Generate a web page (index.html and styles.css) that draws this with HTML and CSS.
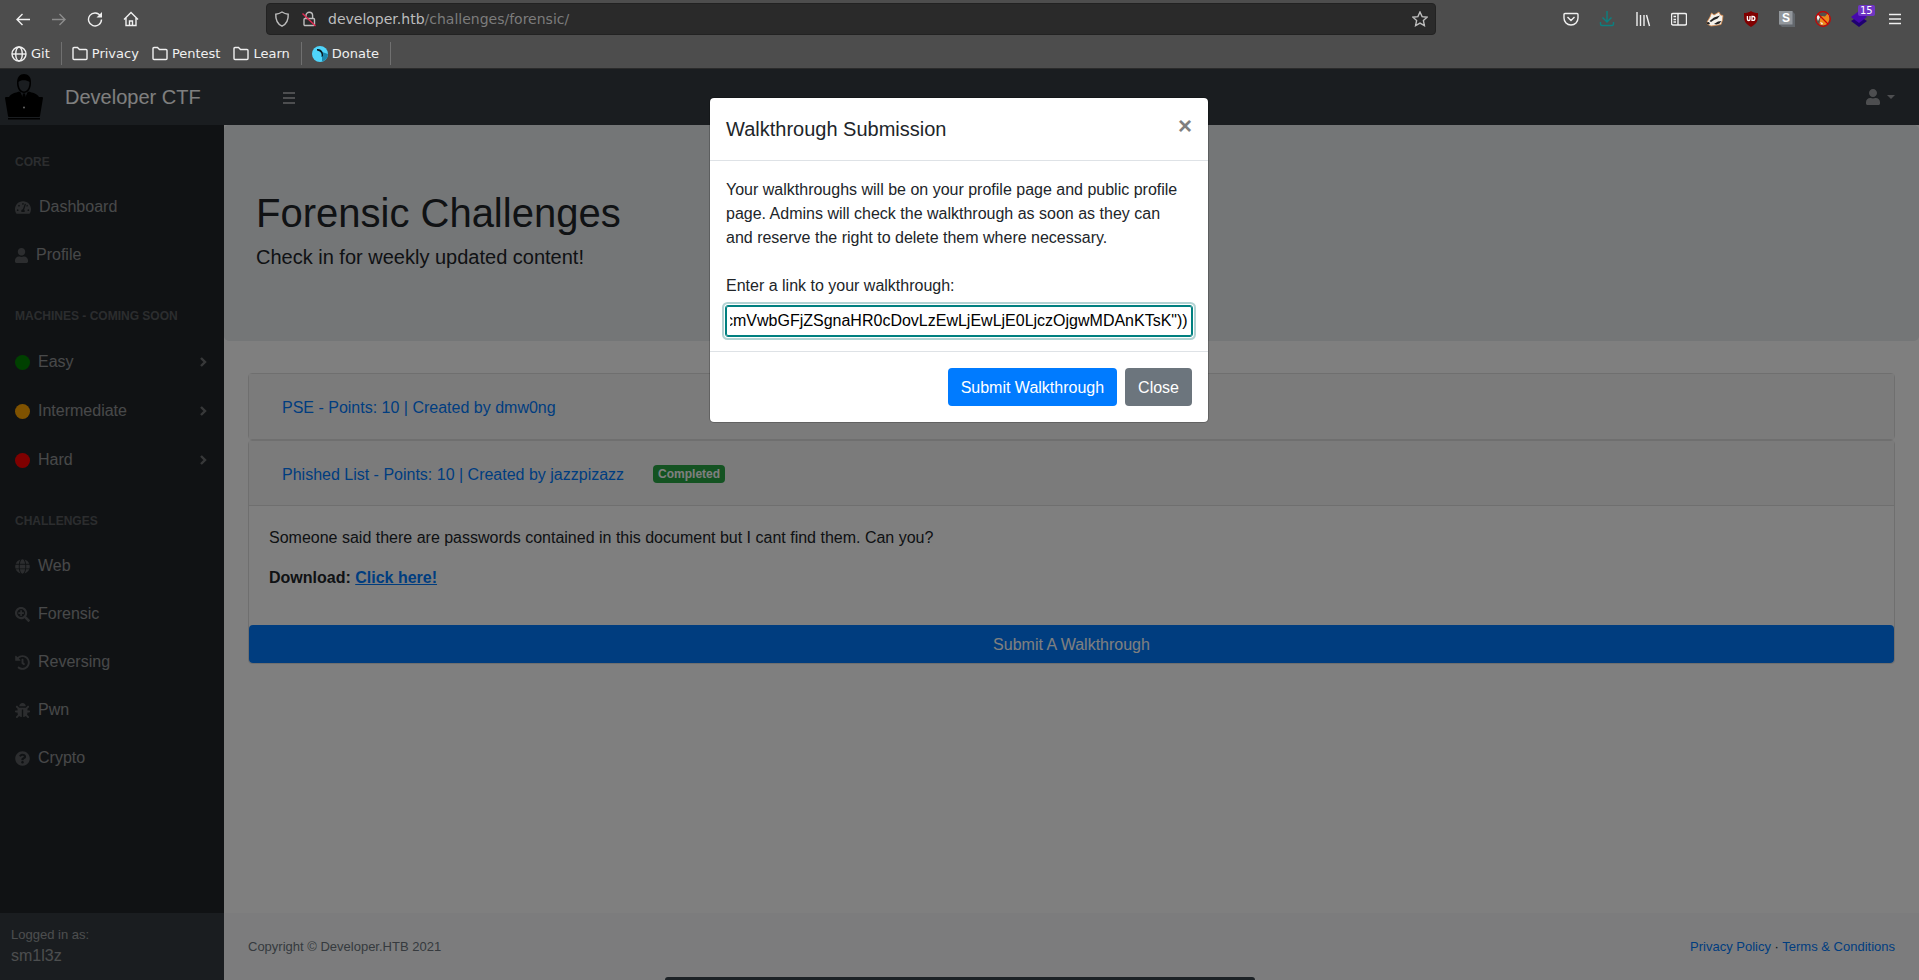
FILE: index.html
```html
<!DOCTYPE html>
<html lang="en">
<head>
    <meta charset="UTF-8">
    <meta name="viewport" content="width=device-width, initial-scale=1.0">
    <title>Developer CTF</title>
    <link rel="stylesheet" href="styles.css">
</head>
<body>

    <!-- Browser toolbar -->
    <header class="browser">
        <div class="toolbar">
            <button class="tool" aria-label="Back"><svg width="16" height="16" viewBox="0 0 16 16"><path d="M15 8.500H2M7.500 3L2 8.500 7.500 14"/></svg></button>
            <button class="tool tool-off" aria-label="Forward"><svg width="16" height="16" viewBox="0 0 16 16"><path d="M1 8.500h13M8.500 3L14 8.500 8.500 14"/></svg></button>
            <button class="tool" aria-label="Reload"><svg width="16" height="16" viewBox="0 0 16 16"><path d="M13.500 5A6.500 6.500 0 1 0 14.500 8.500"/><path class="solid" d="M15 1v5.500H9.500z"/></svg></button>
            <button class="tool" aria-label="Home"><svg width="16" height="16" viewBox="0 0 16 16"><path d="M1 8.500L8 1.500l7 7M3 7v7.500h10V7M6.500 14.500V10h3v4.500"/></svg></button>

            <div class="url-bar">
                <svg class="url-icon" width="16" height="16" viewBox="0 0 16 16"><path d="M8 1C6 2.300 4 3 1.800 3.200 1.500 8.500 3.200 12.800 8 15.200c4.800-2.400 6.500-6.700 6.200-12C12 3 10 2.300 8 1z"/></svg>
                <svg class="url-icon" width="16" height="16" viewBox="0 0 16 16"><rect x="3" y="7.500" width="10.500" height="7" rx="1"/><path d="M5 7.500V4.500a3.300 3.300 0 0 1 6.600 0v3"/><path class="slash" d="M1.500 2.500l13 12.500"/></svg>
                <span class="url">developer.htb<span class="url-path">/challenges/forensic/</span></span>
                <svg class="url-icon star" width="16" height="16" viewBox="0 0 16 16"><path d="M8 1l2.100 4.600 5 .6-3.700 3.400 1 5L8 12.100l-4.400 2.500 1-5L.9 6.200l5-.6z"/></svg>
            </div>

            <button class="tool" aria-label="Pocket"><svg width="16" height="16" viewBox="0 0 16 16"><path d="M2 2.500h12a1 1 0 0 1 1 1V7c0 4-3 7-7 7S1 11 1 7V3.500a1 1 0 0 1 1-1zM4.500 6L8 9.500 11.500 6"/></svg></button>
            <button class="tool tool-download" aria-label="Downloads"><svg width="16" height="16" viewBox="0 0 16 16"><path d="M8 0v11M3.500 6.500L8 11l4.500-4.500M1.500 11v2a1.500 1.500 0 0 0 1.500 1.500h10a1.500 1.500 0 0 0 1.500-1.500v-2"/></svg></button>
            <button class="tool" aria-label="Library"><svg width="16" height="16" viewBox="0 0 16 16"><path d="M2 1v14M5.500 4v11M9 4v11M11.500 4l3 11"/></svg></button>
            <button class="tool" aria-label="Sidebars"><svg width="16" height="16" viewBox="0 0 16 16"><rect x="0.500" y="2.500" width="15" height="11.500" rx="1.500"/><path d="M7 2.500V14M2.500 5.500h2.500M2.500 8.500h2.500M2.500 11h2.500"/></svg></button>
            <button class="tool" aria-label="Privacy Badger">
                <svg class="addon" width="18" height="16" viewBox="0 0 18 16">
                    <path fill="#f5f1ea" stroke="#d98a4a" stroke-width=".8" d="M1 11L4 6l1.500-4L8 4l5-3 1.500 3L17 4.500 16.500 9 15 13.500l-6 1-4 .5-4-2z"/>
                    <path fill="#222" d="M3.500 10L8 6.500l6-2-2.500 3-3.500 1.500L5 11zM8 13l4-2.500L15.500 10l-2 2.500-3 1zM0 11.500l3-.5 1 2-2.500.5z"/>
                </svg>
            </button>
            <button class="tool" aria-label="uBlock Origin">
                <svg class="addon" width="16" height="16" viewBox="0 0 16 16">
                    <path fill="#800000" d="M8 0c2 1.500 4.500 2 7 2 0 7 0 10-7 14C1 12 1 9 1 2c2.500 0 5-.5 7-2z"/>
                    <path fill="none" stroke="#fff" stroke-width="1.300" d="M4.400 5v3.200a1.300 1.300 0 0 0 2.600 0V5M9 5.500v3.800h1a1.900 1.900 0 0 0 0-3.800z"/>
                </svg>
            </button>
            <button class="tool" aria-label="Stylus">
                <svg class="addon" width="16" height="16" viewBox="0 0 16 16">
                    <path fill="#62676c" d="M13 0l3 3v13H3l-3-3z"/>
                    <path fill="#92979c" d="M0 0h13.500v13.500H0z"/>
                    <text class="s-letter" x="3" y="11">S</text>
                </svg>
            </button>
            <button class="tool" aria-label="FoxyProxy">
                <svg class="addon" width="16" height="16" viewBox="0 0 16 16">
                    <circle cx="8" cy="8" r="7" fill="#58514b"/>
                    <path fill="#f08a1d" d="M5 8l1.500-3L10 5.500 13 2l1.500 6-2 5-4 1.500-4-1z"/>
                    <path fill="#eee" d="M1.500 6l2-3 1.500 3-2 4zM5 11l3 1-1 2zM13 3l1.500 1v3z"/>
                    <circle cx="8" cy="8" r="7.300" fill="none" stroke="#c00" stroke-width="1.200"/>
                    <path stroke="#c00" stroke-width="1.200" d="M3 3l10 10"/>
                </svg>
            </button>
            <button class="tool tool-layers" aria-label="Wappalyzer">
                <svg class="addon" width="16" height="16" viewBox="0 0 16 16">
                    <path fill="#1f0071" d="M0 10l8-5 8 5-8 6z"/>
                    <path fill="#4608ad" d="M0 6l8-6 8 6-8 6z"/>
                </svg>
                <span class="count">15</span>
            </button>
            <button class="tool" aria-label="Menu"><svg width="16" height="16" viewBox="0 0 16 16"><path d="M2 3.500h12M2 8h12M2 12.500h12"/></svg></button>
        </div>

        <nav class="bookmarks">
            <a href="#"><svg width="16" height="16" viewBox="0 0 16 16"><circle cx="8" cy="8" r="7"/><ellipse cx="8" cy="8" rx="3.300" ry="7"/><path d="M1 8h14"/></svg>Git</a>
            <span class="sep"></span>
            <a href="#"><svg width="16" height="16" viewBox="0 0 16 16"><path d="M1 12.500v-10a1 1 0 0 1 1-1h3.500l2 2H14a1 1 0 0 1 1 1v8a1 1 0 0 1-1 1H2a1 1 0 0 1-1-1z"/></svg>Privacy</a>
            <a href="#"><svg width="16" height="16" viewBox="0 0 16 16"><path d="M1 12.500v-10a1 1 0 0 1 1-1h3.500l2 2H14a1 1 0 0 1 1 1v8a1 1 0 0 1-1 1H2a1 1 0 0 1-1-1z"/></svg>Pentest</a>
            <a href="#"><svg width="16" height="16" viewBox="0 0 16 16"><path d="M1 12.500v-10a1 1 0 0 1 1-1h3.500l2 2H14a1 1 0 0 1 1 1v8a1 1 0 0 1-1 1H2a1 1 0 0 1-1-1z"/></svg>Learn</a>
            <span class="sep"></span>
            <a href="#"><svg class="addon" width="16" height="16" viewBox="0 0 16 16"><circle cx="8" cy="8" r="8" fill="#4fd5fb"/><path fill="#1c87ad" d="M10 6l6 2a8 8 0 0 1-6 7.500z"/><path fill="#0b1a20" d="M5 3c4-.5 6.500 2.500 6 7l-1.500 1C10 8 9.500 5.500 5 4.500z"/></svg>Donate</a>
            <span class="sep"></span>
        </nav>
    </header>

    <div class="app">
        <!-- Top nav -->
        <nav class="topnav">
            <a class="brand" href="#">
                <svg width="38" height="46" viewBox="0 0 38 46">
                    <path d="M12 9c0-6 3-9 7-9s7.500 3 7 9c0 6-3 10-7 10s-7-4-7-10z"/>
                    <path fill="#343a40" d="M13.500 8c2-2.500 8-2.500 11 0 0 6-2.500 9.500-5.500 9.500S13.500 14 13.500 8z"/>
                    <path d="M4 23c2-4 7-4 10-5.500l5 2.500 5-2.500c3 1.500 8 1.500 10 5.500z"/>
                    <path fill="#343a40" d="M15.500 18l3.500 2 3.500-2-2 5h-3z"/>
                    <path d="M18 19.500h2l.8 3.500h-3.600zM1 23h36a1 1 0 0 1 1 1l-3 18a1 1 0 0 1-1 1H4a1 1 0 0 1-1-1L0 24a1 1 0 0 1 1-1zM3 44h32v1.500H3z"/>
                    <circle cx="19" cy="33.500" r="1" fill="#ccc"/>
                </svg>
                Developer CTF
            </a>
            <button class="toggle" aria-label="Toggle sidebar">
                <svg width="12" height="14" viewBox="0 0 12 14"><path d="M0 2h12v2H0zM0 7h12v2H0zM0 12h12v2H0z"/></svg>
            </button>
            <button class="user-menu" aria-label="User menu">
                <svg width="14" height="16" viewBox="0 0 448 512"><path d="M224 256c70.700 0 128-57.300 128-128S294.700 0 224 0 96 57.300 96 128s57.300 128 128 128zm89.600 32h-16.700c-22.200 10.200-46.900 16-72.900 16s-50.600-5.800-72.900-16h-16.700C60.200 288 0 348.200 0 422.400V464c0 26.500 21.500 48 48 48h352c26.500 0 48-21.500 48-48v-41.600c0-74.200-60.200-134.400-134.400-134.400z"/></svg>
                <span class="caret"></span>
            </button>
        </nav>

        <div class="layout">
            <aside class="sidebar">
                <nav class="side-menu">
                    <h2 class="side-heading">Core</h2>
                    <a class="side-link" href="#"><svg width="16" height="15" viewBox="0 0 576 512"><path d="M288 32C128.940 32 0 160.940 0 320c0 52.800 14.250 102.260 39.060 144.800 5.610 9.620 16.300 15.200 27.440 15.200h443c11.140 0 21.830-5.580 27.440-15.200C561.750 422.260 576 372.800 576 320c0-159.060-128.940-288-288-288zm0 64c14.710 0 26.580 10.130 30.320 23.650-1.110 2.260-2.640 4.230-3.450 6.670l-9.220 27.670c-5.130 3.490-10.970 6.010-17.640 6.010-17.670 0-32-14.330-32-32S270.330 96 288 96zM96 384c-17.670 0-32-14.330-32-32s14.330-32 32-32 32 14.330 32 32-14.330 32-32 32zm48-160c-17.670 0-32-14.330-32-32s14.330-32 32-32 32 14.330 32 32-14.330 32-32 32zm246.770-72.410l-61.330 184C343.130 347.330 352 364.540 352 384c0 11.720-3.380 22.550-8.880 32H232.880c-5.500-9.450-8.880-20.280-8.880-32 0-33.940 26.500-61.430 59.900-63.590l61.340-184.010c4.170-12.560 17.730-19.450 30.360-15.170 12.570 4.190 19.350 17.790 15.170 30.360zm14.660 57.200l15.520-46.550c3.470-1.290 7.130-2.230 11.050-2.230 17.670 0 32 14.330 32 32s-14.330 32-32 32c-11.380-.01-20.890-6.280-26.570-15.220zM480 384c-17.670 0-32-14.330-32-32s14.330-32 32-32 32 14.330 32 32-14.330 32-32 32z"/></svg>Dashboard</a>
                    <a class="side-link" href="#"><svg width="13" height="15" viewBox="0 0 448 512"><path d="M224 256c70.700 0 128-57.300 128-128S294.700 0 224 0 96 57.300 96 128s57.300 128 128 128zm89.600 32h-16.700c-22.200 10.200-46.900 16-72.900 16s-50.600-5.800-72.900-16h-16.700C60.200 288 0 348.200 0 422.400V464c0 26.500 21.500 48 48 48h352c26.500 0 48-21.500 48-48v-41.600c0-74.200-60.200-134.400-134.400-134.400z"/></svg>Profile</a>

                    <h2 class="side-heading">Machines - Coming Soon</h2>
                    <a class="side-link level" href="#"><span class="dot easy"></span>Easy<svg class="arrow" width="8" height="12" viewBox="0 0 8 12"><path d="M2 2l4 4-4 4"/></svg></a>
                    <a class="side-link level" href="#"><span class="dot medium"></span>Intermediate<svg class="arrow" width="8" height="12" viewBox="0 0 8 12"><path d="M2 2l4 4-4 4"/></svg></a>
                    <a class="side-link level" href="#"><span class="dot hard"></span>Hard<svg class="arrow" width="8" height="12" viewBox="0 0 8 12"><path d="M2 2l4 4-4 4"/></svg></a>

                    <h2 class="side-heading">Challenges</h2>
                    <a class="side-link" href="#"><svg width="15" height="15" viewBox="0 0 496 512"><path d="M336.500 160C322 70.700 287.800 8 248 8s-74 62.700-88.500 152h177zM152 256c0 22.200 1.200 43.500 3.300 64h185.300c2.100-20.500 3.300-41.800 3.300-64s-1.200-43.500-3.300-64H155.300c-2.100 20.500-3.300 41.800-3.300 64zm324.700-96c-28.600-67.900-86.500-120.400-158-141.600 24.400 33.800 41.200 84.700 50 141.600h108zM177.200 18.400C105.800 39.600 47.800 92.100 19.300 160h108c8.700-56.900 25.500-107.800 49.900-141.600zM487.400 192H372.700c2.100 21 3.300 42.500 3.300 64s-1.200 43-3.300 64h114.600c5.500-20.500 8.600-41.800 8.600-64s-3.100-43.500-8.500-64zM120 256c0-21.500 1.200-43 3.300-64H8.600C3.200 212.500 0 233.800 0 256s3.200 43.500 8.600 64h114.600c-2-21-3.200-42.500-3.200-64zm39.500 96c14.500 89.300 48.700 152 88.500 152s74-62.700 88.500-152h-177zm159.300 141.600c71.400-21.200 129.400-73.700 158-141.600h-108c-8.800 56.900-25.600 107.800-50 141.600zM19.300 352c28.600 67.900 86.500 120.400 158 141.600-24.400-33.800-41.200-84.700-50-141.600h-108z"/></svg>Web</a>
                    <a class="side-link" href="#"><svg width="15" height="15" viewBox="0 0 512 512"><path d="M304 192v32c0 6.600-5.400 12-12 12h-56v56c0 6.600-5.400 12-12 12h-32c-6.600 0-12-5.400-12-12v-56h-56c-6.600 0-12-5.400-12-12v-32c0-6.600 5.400-12 12-12h56v-56c0-6.600 5.400-12 12-12h32c6.600 0 12 5.400 12 12v56h56c6.600 0 12 5.400 12 12zm201 284.700L476.700 505c-9.400 9.400-24.600 9.400-33.900 0L343 405.300c-4.500-4.500-7-10.600-7-17V372c-35.300 27.600-79.700 44-128 44C93.100 416 0 322.900 0 208S93.100 0 208 0s208 93.100 208 208c0 48.300-16.400 92.700-44 128h16.300c6.400 0 12.500 2.500 17 7l99.700 99.700c9.300 9.400 9.300 24.600 0 34zM344 208c0-75.200-60.800-136-136-136S72 132.800 72 208s60.800 136 136 136 136-60.800 136-136z"/></svg>Forensic</a>
                    <a class="side-link" href="#"><svg width="15" height="15" viewBox="0 0 512 512"><path d="M504 255.531c.253 136.640-111.180 248.372-247.820 248.468-59.015.042-113.223-20.530-155.822-54.911-11.077-8.940-11.905-25.541-1.839-35.607l11.267-11.267c8.609-8.609 22.353-9.551 31.891-1.984C173.062 425.135 212.781 440 256 440c101.705 0 184-82.311 184-184 0-101.705-82.311-184-184-184-48.814 0-93.149 18.969-126.068 49.932l50.754 50.754c10.080 10.080 2.941 27.314-11.313 27.314H24c-8.837 0-16-7.163-16-16V38.627c0-14.254 17.234-21.393 27.314-11.314l49.372 49.372C129.209 34.136 189.552 8 256 8c136.810 0 247.747 110.780 248 247.531zm-180.912 78.784l9.823-12.630c8.138-10.463 6.253-25.542-4.210-33.679L288 256.349V152c0-13.255-10.745-24-24-24h-16c-13.255 0-24 10.745-24 24v135.651l65.409 50.874c10.463 8.137 25.541 6.253 33.679-4.210z"/></svg>Reversing</a>
                    <a class="side-link" href="#"><svg width="15" height="15" viewBox="0 0 512 512"><path d="M511.988 288.900c-.478 17.430-15.217 31.100-32.653 31.100H424v16c0 21.864-4.882 42.584-13.600 61.145l60.228 60.228c12.496 12.497 12.496 32.758 0 45.255-12.498 12.497-32.759 12.496-45.256 0l-54.736-54.736C345.886 467.965 314.351 480 280 480V236c0-6.627-5.373-12-12-12h-24c-6.627 0-12 5.373-12 12v244c-34.351 0-65.886-12.035-90.636-32.108l-54.736 54.736c-12.498 12.497-32.759 12.496-45.256 0-12.496-12.497-12.496-32.758 0-45.255l60.228-60.228C92.882 378.584 88 357.864 88 336v-16H32.666C15.230 320 .491 306.330.013 288.900-.484 270.816 14.028 256 32 256h56v-58.745l-46.628-46.628c-12.496-12.497-12.496-32.758 0-45.255 12.498-12.497 32.758-12.497 45.256 0L141.255 160h229.489l54.627-54.627c12.498-12.497 32.758-12.497 45.256 0 12.496 12.497 12.496 32.758 0 45.255L424 197.255V256h56c17.972 0 32.484 14.816 31.988 32.900zM257 0c-61.856 0-112 50.144-112 112h224C369 50.144 318.856 0 257 0z"/></svg>Pwn</a>
                    <a class="side-link" href="#"><svg width="15" height="15" viewBox="0 0 512 512"><path d="M504 256c0 136.997-111.043 248-248 248S8 392.997 8 256C8 119.083 119.043 8 256 8s248 111.083 248 248zM262.655 90c-54.497 0-89.255 22.957-116.549 63.758-3.536 5.286-2.353 12.415 2.715 16.258l34.699 26.310c5.205 3.947 12.621 3.008 16.665-2.122 17.864-22.658 30.113-35.797 57.303-35.797 20.429 0 45.698 13.148 45.698 32.958 0 14.976-12.363 22.667-32.534 33.976C247.128 238.528 216 254.941 216 296v4c0 6.627 5.373 12 12 12h56c6.627 0 12-5.373 12-12v-1.333c0-28.462 83.186-29.647 83.186-106.667 0-58.002-60.165-102-116.531-102zM256 338c-25.365 0-46 20.635-46 46 0 25.364 20.635 46 46 46s46-20.636 46-46c0-25.364-20.635-46-46-46z"/></svg>Crypto</a>
                </nav>
                <div class="side-footer">
                    <div class="small">Logged in as:</div>
                    sm1l3z
                </div>
            </aside>

            <div class="content">
                <main>
                    <div class="jumbotron">
                        <h1>Forensic Challenges</h1>
                        <p>Check in for weekly updated content!</p>
                    </div>

                    <div class="challenges">
                        <div class="card">
                            <div class="card-header">
                                <button class="btn btn-link">PSE - Points: 10 | Created by dmw0ng</button>
                            </div>
                        </div>
                        <div class="card">
                            <div class="card-header open">
                                <button class="btn btn-link">Phished List - Points: 10 | Created by jazzpizazz</button>
                                <span class="badge">Completed</span>
                            </div>
                            <div class="card-body">
                                <p>Someone said there are passwords contained in this document but I cant find them. Can you?</p>
                                <p><b>Download: <a class="download" href="#">Click here!</a></b></p>
                            </div>
                            <button class="btn btn-primary btn-block">Submit A Walkthrough</button>
                        </div>
                    </div>
                </main>

                <footer class="footer">
                    <span>Copyright © Developer.HTB 2021</span>
                    <span class="footer-links"><a href="#">Privacy Policy</a> · <a href="#">Terms &amp; Conditions</a></span>
                </footer>
            </div>
        </div>

        <!-- Walkthrough modal -->
        <div class="backdrop">
            <div class="modal" role="dialog" aria-labelledby="modal-title">
                <div class="modal-header">
                    <h2 id="modal-title">Walkthrough Submission</h2>
                    <button class="close" aria-label="Close dialog">×</button>
                </div>
                <div class="modal-body">
                    <p>Your walkthroughs will be on your profile page and public profile page. Admins will check the walkthrough as soon as they can and reserve the right to delete them where necessary.</p>
                    <label for="walkthrough">Enter a link to your walkthrough:</label>
                    <input type="text" id="walkthrough" value="cmVwbGFjZSgnaHR0cDovLzEwLjEwLjE0LjczOjgwMDAnKTsK&quot;))">
                </div>
                <div class="modal-footer">
                    <button class="btn btn-primary">Submit Walkthrough</button>
                    <button class="btn btn-secondary">Close</button>
                </div>
            </div>
        </div>
    </div>

    <div class="dock"></div>

    <script>
        // keep the end of the link in view
        const input = document.getElementById('walkthrough');
        input.scrollLeft = input.scrollWidth;
    </script>

</body>
</html>
```

FILE: styles.css
```css
* {
    box-sizing: border-box;
}
body {
    display: flex;
    flex-direction: column;
    min-height: 100vh;
    margin: 0;
    font-family: "Liberation Sans", Arial, sans-serif;
    font-size: 16px;
    line-height: 24px;
    color: #212529;
    background-color: #fff;
}
a {
    color: #007bff;
    text-decoration: none;
}
button {
    font: inherit;
    cursor: pointer;
}
h1, h2, p {
    margin: 0;
    font-weight: normal;
}

/* Browser */
.browser {
    background-color: #4d4d4d;
    border-bottom: 1px solid #2b2b2b;
    font-family: "DejaVu Sans", sans-serif;
    font-size: 13px;
    color: #f0f0f0;
}
.toolbar {
    display: flex;
    align-items: center;
    height: 38px;
    padding: 0 6px 0 5px;
}
.tool {
    display: flex;
    align-items: center;
    justify-content: center;
    width: 36px;
    height: 32px;
    padding: 0;
    border: none;
    background: none;
    color: #f0f0f0;
}
.tool-off {
    color: #8c8c8c;
}
.tool-download {
    color: #0b8080;
}
.tool-layers {
    position: relative;
}
.count {
    position: absolute;
    top: 2px;
    left: 17px;
    padding: 0 2px;
    border-radius: 2px;
    background-color: #6f35c4;
    color: #fff;
    font-size: 10px;
    line-height: 11px;
}
.browser svg {
    flex: none;
    fill: none;
    stroke: currentColor;
    stroke-width: 1.4;
}
.browser svg .solid {
    fill: currentColor;
    stroke: none;
}
.browser svg.addon {
    stroke: none;
}
.s-letter {
    fill: #fff;
    font-family: "Liberation Sans", Arial, sans-serif;
    font-size: 12px;
    font-weight: bold;
}
.url-bar {
    display: flex;
    flex: 1;
    align-items: center;
    gap: 11px;
    height: 32px;
    margin: 0 117px;
    padding: 0 7px;
    border: 1px solid #222;
    border-radius: 4px;
    background-color: #2a2a2a;
    color: #bdbdbd;
}
.url {
    font-size: 14px;
}
.url-path {
    color: #7c7c7c;
}
.url-bar .slash {
    stroke: #e22850;
}
.star {
    margin-left: auto;
}
.bookmarks {
    display: flex;
    align-items: center;
    gap: 13px;
    height: 30px;
    padding: 1px 11px 0;
}
.bookmarks a {
    display: flex;
    align-items: center;
    gap: 4px;
    color: #f0f0f0;
}
.sep {
    width: 1px;
    height: 23px;
    margin: 0 -3px 0 -2px;
    background-color: #707070;
}

/* Top nav */
.app {
    position: relative;
    display: flex;
    flex: 1;
    flex-direction: column;
}
.topnav {
    display: flex;
    align-items: center;
    height: 56px;
    padding: 0 24px 0 5px;
    background-color: #343a40;
}
.brand {
    display: flex;
    align-items: center;
    gap: 22px;
    width: 278px;
    font-size: 20px;
    color: #fff;
}
.toggle, .user-menu {
    display: flex;
    align-items: center;
    padding: 0;
    border: none;
    background: none;
}
.toggle svg, .user-menu svg {
    fill: rgba(255, 255, 255, 0.5);
}
.user-menu {
    gap: 7px;
    margin-left: auto;
}
.caret {
    border-top: 4px solid rgba(255, 255, 255, 0.5);
    border-left: 4px solid transparent;
    border-right: 4px solid transparent;
}

/* Sidebar */
.layout {
    display: flex;
    flex: 1;
}
.sidebar {
    display: flex;
    flex: none;
    flex-direction: column;
    justify-content: space-between;
    width: 224px;
    background-color: #212529;
    color: rgba(255, 255, 255, 0.5);
}
.side-heading {
    padding: 28px 15px 12px;
    font-size: 12px;
    line-height: 18px;
    font-weight: bold;
    text-transform: uppercase;
    color: rgba(255, 255, 255, 0.25);
}
.side-link {
    display: flex;
    align-items: center;
    gap: 8px;
    padding: 12px 15px;
    color: rgba(255, 255, 255, 0.5);
}
.side-link svg {
    fill: rgba(255, 255, 255, 0.25);
}
.level {
    padding: 13px 17px 12px 15px;
}
.dot {
    width: 15px;
    height: 15px;
    border-radius: 50%;
}
.easy {
    background-color: green;
}
.medium {
    background-color: orange;
}
.hard {
    background-color: red;
}
.side-link .arrow {
    margin-left: auto;
    fill: none;
    stroke: rgba(255, 255, 255, 0.35);
    stroke-width: 2.4;
}
.side-footer {
    padding: 12px 11px;
    background-color: #343a40;
}
.small {
    font-size: 13px;
    line-height: 19px;
}

/* Content */
.content {
    display: flex;
    flex: 1;
    flex-direction: column;
    justify-content: space-between;
}
.jumbotron {
    padding: 64px 32px 72px;
    border-radius: 5px;
    background-color: #e9ecef;
}
.jumbotron h1 {
    margin-bottom: 8px;
    font-size: 40px;
    line-height: 48px;
}
.jumbotron p {
    font-size: 20px;
}
.challenges {
    padding: 32px 24px;
}
.card {
    border: 1px solid #dfdfdf;
    border-radius: 4px;
}
.card-header {
    display: flex;
    align-items: center;
    gap: 16px;
    padding: 14px 20px 13px;
    background-color: #f7f7f7;
}
.open {
    padding-bottom: 12px;
    border-bottom: 1px solid #dfdfdf;
}
.btn {
    padding: 7px 12px 5px;
    border: 1px solid transparent;
    border-radius: 4px;
    color: #fff;
}
.btn-link {
    background: none;
    color: #007bff;
}
.btn-primary {
    background-color: #007bff;
}
.btn-secondary {
    background-color: #6c757d;
}
.btn-block {
    display: block;
    width: 100%;
}
.badge {
    padding: 3px 5px;
    border-radius: 4px;
    background-color: #28a745;
    color: #fff;
    font-size: 12px;
    line-height: 12px;
    font-weight: bold;
}
.card-body {
    padding: 20px 20px 35px;
}
.card-body p + p {
    margin-top: 16px;
}
.download {
    text-decoration: underline;
}
.footer {
    display: flex;
    justify-content: space-between;
    padding: 24px;
    background-color: #f8f9fa;
    font-size: 13px;
    line-height: 19px;
    color: #6c757d;
}
.footer-links {
    color: #212529;
}

/* Modal */
.backdrop {
    position: absolute;
    top: 0;
    right: 0;
    bottom: 0;
    left: 0;
    padding: 28px 29px 28px 28px;
    background-color: rgba(0, 0, 0, 0.5);
}
.modal {
    max-width: 500px;
    margin: 0 auto;
    border: 1px solid rgba(0, 0, 0, 0.2);
    border-radius: 5px;
    background-color: #fff;
    background-clip: padding-box;
}
.modal-header {
    display: flex;
    align-items: flex-start;
    justify-content: space-between;
    padding: 16px;
    border-bottom: 1px solid #dee2e6;
}
.modal-header h2 {
    font-size: 20px;
    line-height: 30px;
}
.close {
    padding: 0;
    border: none;
    background: none;
    color: #7f7f7f;
    font-size: 24px;
    line-height: 24px;
    font-weight: bold;
}
.modal-body {
    padding: 17px 16px 15px;
}
.modal-body p {
    margin-bottom: 24px;
    padding-right: 8px;
}
.modal-body label {
    display: block;
    margin-bottom: 8px;
}
.modal-body input {
    display: block;
    width: 100%;
    height: 30px;
    padding: 1px 3px;
    border: 1px solid #008080;
    outline: 1px solid #008080;
    border-radius: 2px;
    box-shadow: 0 0 0 2px #fff, 0 0 0 4px #b2d3d3;
    font: inherit;
    color: #000;
}
.modal-footer {
    display: flex;
    justify-content: flex-end;
    gap: 8px;
    padding: 16px;
    border-top: 1px solid #dee2e6;
}

/* Top edge of the desktop dock */
.dock {
    position: fixed;
    bottom: 0;
    left: 50%;
    width: 590px;
    height: 3px;
    margin-left: -295px;
    border-radius: 6px 6px 0 0;
    background-color: #1d2226;
}
```
